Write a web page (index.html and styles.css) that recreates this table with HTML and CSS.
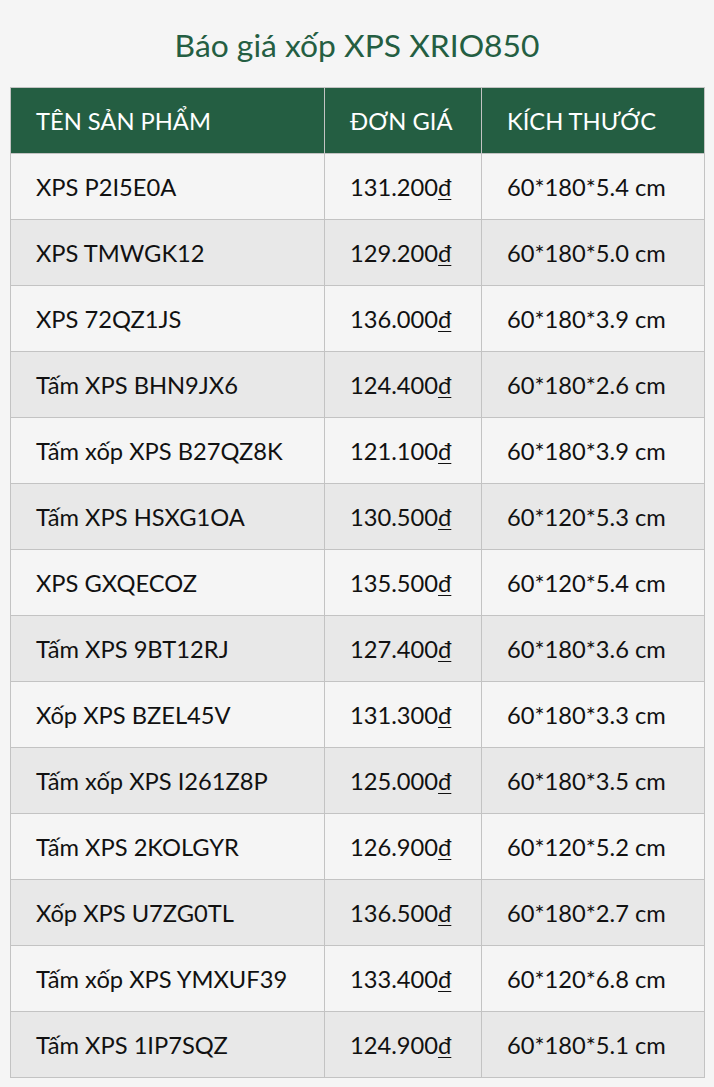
FILE: index.html
```html
<!DOCTYPE html>
<html lang="vi">
<head>
<meta charset="utf-8">
<title>Báo giá xốp XPS XRIO850</title>
<link rel="stylesheet" href="styles.css">
</head>
<body>
<div class="page">
  <h1 class="title">Báo giá xốp XPS XRIO850</h1>
  <table class="price-table">
    <colgroup>
      <col class="c-name">
      <col class="c-price">
      <col class="c-size">
    </colgroup>
    <thead>
      <tr><th>TÊN SẢN PHẨM</th><th>ĐƠN GIÁ</th><th>KÍCH THƯỚC</th></tr>
    </thead>
    <tbody>
      <tr><td>XPS P2I5E0A</td><td>131.200<u>đ</u></td><td>60*180*5.4 cm</td></tr>
      <tr><td>XPS TMWGK12</td><td>129.200<u>đ</u></td><td>60*180*5.0 cm</td></tr>
      <tr><td>XPS 72QZ1JS</td><td>136.000<u>đ</u></td><td>60*180*3.9 cm</td></tr>
      <tr><td>Tấm XPS BHN9JX6</td><td>124.400<u>đ</u></td><td>60*180*2.6 cm</td></tr>
      <tr><td>Tấm xốp XPS B27QZ8K</td><td>121.100<u>đ</u></td><td>60*180*3.9 cm</td></tr>
      <tr><td>Tấm XPS HSXG1OA</td><td>130.500<u>đ</u></td><td>60*120*5.3 cm</td></tr>
      <tr><td>XPS GXQECOZ</td><td>135.500<u>đ</u></td><td>60*120*5.4 cm</td></tr>
      <tr><td>Tấm XPS 9BT12RJ</td><td>127.400<u>đ</u></td><td>60*180*3.6 cm</td></tr>
      <tr><td>Xốp XPS BZEL45V</td><td>131.300<u>đ</u></td><td>60*180*3.3 cm</td></tr>
      <tr><td>Tấm xốp XPS I261Z8P</td><td>125.000<u>đ</u></td><td>60*180*3.5 cm</td></tr>
      <tr><td>Tấm XPS 2KOLGYR</td><td>126.900<u>đ</u></td><td>60*120*5.2 cm</td></tr>
      <tr><td>Xốp XPS U7ZG0TL</td><td>136.500<u>đ</u></td><td>60*180*2.7 cm</td></tr>
      <tr><td>Tấm xốp XPS YMXUF39</td><td>133.400<u>đ</u></td><td>60*120*6.8 cm</td></tr>
      <tr><td>Tấm XPS 1IP7SQZ</td><td>124.900<u>đ</u></td><td>60*180*5.1 cm</td></tr>
    </tbody>
  </table>
</div>
</body>
</html>
```
FILE: styles.css
```css
html, body {
  margin: 0;
  padding: 0;
  background: #f5f5f5;
}
.page {
  width: 714px;
  padding: 0 10px;
  box-sizing: border-box;
  font-family: Lato, "Open Sans", "Liberation Sans", sans-serif;
}
.title {
  margin: 0;
  height: 87px;
  display: flex;
  align-items: center;
  justify-content: center;
  padding-top: 2px;
  box-sizing: border-box;
  font-size: 31.8px;
  font-weight: 400;
  color: #245e42;
}
.price-table {
  width: 694px;
  border-collapse: collapse;
  table-layout: fixed;
  font-size: 23.7px;
  color: #111;
}
.c-name { width: 314px; }
.c-price { width: 157px; }
.c-size { width: 223px; }
.price-table th,
.price-table td {
  height: 66px;
  padding: 0 0 0 25px;
  border: 1px solid #c3c3c3;
  text-align: left;
  vertical-align: middle;
  white-space: nowrap;
  box-sizing: border-box;
}
.price-table th {
  background: #245e42;
  color: #fff;
  font-weight: 400;
}
.price-table tbody tr:nth-child(odd) td { background: #f5f5f5; }
.price-table tbody tr:nth-child(even) td { background: #e8e8e8; }
.price-table u {
  text-decoration-thickness: 1px;
  text-underline-offset: 3px;
}
```
